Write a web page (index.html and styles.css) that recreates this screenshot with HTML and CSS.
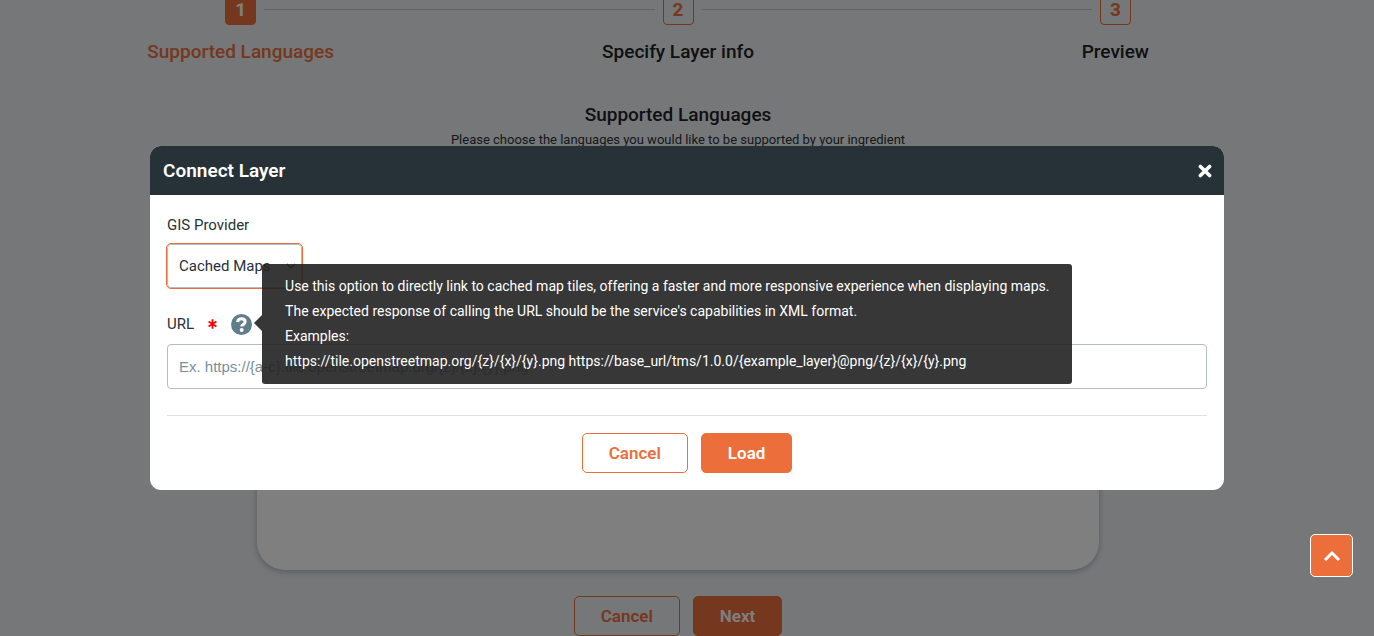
FILE: index.html
```html
<!DOCTYPE html>
<html lang="en">
<head>
    <meta charset="UTF-8">
    <meta name="viewport" content="width=device-width, initial-scale=1.0">
    <title>Connect Layer</title>
    <link rel="stylesheet" href="styles.css">
</head>
<body>
    <main class="page">
        <ol class="steps">
            <li class="step active">
                <div class="step-track"><span class="step-number">1</span></div>
                <span class="step-title">Supported Languages</span>
            </li>
            <li class="step">
                <div class="step-track"><span class="step-number">2</span></div>
                <span class="step-title">Specify Layer info</span>
            </li>
            <li class="step">
                <div class="step-track"><span class="step-number">3</span></div>
                <span class="step-title">Preview</span>
            </li>
        </ol>

        <h1 class="page-title">Supported Languages</h1>
        <p class="page-hint">Please choose the languages you would like to be supported by your ingredient</p>

        <section class="card"></section>

        <div class="actions">
            <button type="button" class="btn btn-outline">Cancel</button>
            <button type="button" class="btn btn-primary">Next</button>
        </div>
    </main>

    <div class="overlay">
        <div class="modal" role="dialog" aria-modal="true" aria-labelledby="modal-title">
            <header class="modal-header">
                <h2 class="modal-title" id="modal-title">Connect Layer</h2>
                <button type="button" class="close" aria-label="Close">
                    <svg width="14" height="14" viewBox="0 0 14 14"><path d="M2.4 2.4l9.2 9.2M11.6 2.4l-9.2 9.2" fill="none" stroke="#fff" stroke-width="3.6" stroke-linecap="round"/></svg>
                </button>
            </header>

            <form class="modal-body">
                <div class="label-row">
                    <label for="provider">GIS Provider</label>
                </div>
                <div class="select-wrap">
                    <select id="provider" class="field provider">
                        <option>Cached Maps</option>
                    </select>
                    <svg class="chevron" width="10" height="6" viewBox="0 0 10 6"><path d="M1 1l4 4 4-4" fill="none" stroke="#263238" stroke-width="1.2"/></svg>
                </div>

                <div class="label-row url-row">
                    <label for="url">URL</label>
                    <svg class="required" width="9" height="10" viewBox="0 0 9 10"><path d="M4.5 .3v9.4M.6 2.6l7.8 4.8M8.4 2.6L.6 7.4" fill="none" stroke="#f00" stroke-width="1.8"/></svg>
                    <span class="help" aria-describedby="url-help">
                        <svg width="21" height="21" viewBox="0 0 512 512"><circle cx="256" cy="256" r="256" fill="#607d8b"/><path d="M160 194c8-52 42-80 96-80 50 0 88 30 88 74 0 36-20 52-46 70-24 16-36 24-36 48" fill="none" stroke="#fff" stroke-width="74"/><circle cx="260" cy="388" r="48" fill="#fff"/></svg>
                        <span class="tooltip" id="url-help" role="tooltip">
                            Use this option to directly link to cached map tiles, offering a faster and more responsive experience when displaying maps.<br>
                            The expected response of calling the URL should be the service's capabilities in XML format.<br>
                            Examples:<br>
                            https://tile.openstreetmap.org/{z}/{x}/{y}.png https://base_url/tms/1.0.0/{example_layer}@png/{z}/{x}/{y}.png
                        </span>
                    </span>
                </div>
                <input type="text" id="url" class="field url" placeholder="Ex. https://{a-c}.tile.openstreetmap.org/{z}/{x}/{y}.png">

                <div class="modal-actions">
                    <button type="button" class="btn btn-outline">Cancel</button>
                    <button type="button" class="btn btn-primary">Load</button>
                </div>
            </form>
        </div>
    </div>

    <button type="button" class="to-top" aria-label="Back to top">
        <svg width="18" height="12" viewBox="0 0 18 12"><path d="M2 10l7-7 7 7" fill="none" stroke="#fff" stroke-width="3"/></svg>
    </button>
</body>
</html>
```
FILE: styles.css
```css
* {
    box-sizing: border-box;
}

body {
    margin: 0;
    padding-right: 18px;
    height: 100vh;
    overflow: hidden;
    font-family: Roboto, sans-serif;
    font-size: 15px;
    color: #263238;
    background-color: #edeff2;
}

h1,
h2,
p {
    margin: 0;
}

.page {
    display: flex;
    flex-direction: column;
    align-items: center;
    margin-top: -6px;
}

/* Steps */
.steps {
    display: grid;
    grid-template-columns: repeat(3, 1fr);
    align-self: stretch;
    margin: 0;
    padding: 0 22px;
    list-style: none;
}

.step {
    display: flex;
    flex-direction: column;
    gap: 14px;
    text-align: center;
}

.step-track {
    display: flex;
    align-items: center;
    gap: 8px;
}

.step-track::before,
.step-track::after {
    content: "";
    flex: 1;
    height: 1px;
    background-color: #c4c8cc;
}

.step:first-child .step-track::before,
.step:last-child .step-track::after {
    visibility: hidden;
}

.step-number {
    width: 31px;
    height: 31px;
    border: 1px solid #eb6e3b;
    border-radius: 4px;
    font-size: 19px;
    font-weight: 700;
    line-height: 30px;
    color: #eb6e3b;
}

.step-title,
.page-title {
    font-size: 19px;
    font-weight: 500;
    line-height: 26px;
    color: #1c2226;
}

.active .step-number {
    background-color: #eb6e3b;
    color: #fff;
}

.active .step-title {
    color: #eb6e3b;
}

.page-title {
    margin-top: 37px;
}

.page-hint {
    font-size: 13px;
    line-height: 24px;
}

.card {
    width: 842px;
    max-width: 90%;
    height: 410px;
    margin-top: 8px;
    border-radius: 28px;
    background-color: #fff;
    box-shadow: 0 2px 6px #a9b8be;
}

/* Buttons */
.actions,
.modal-actions {
    display: flex;
    justify-content: center;
    gap: 13px;
}

.actions {
    margin-top: 26px;
}

.btn {
    height: 40px;
    padding: 0 26px;
    border: 1px solid #eb6e3b;
    border-radius: 5px;
    font-family: inherit;
    font-size: 17px;
    font-weight: 600;
    cursor: pointer;
}

.btn-outline {
    background-color: transparent;
    color: #eb6e3b;
}

.btn-primary {
    background-color: #eb6e3b;
    color: #fff;
}

/* Modal */
.overlay {
    position: fixed;
    inset: 0;
    display: flex;
    align-items: center;
    justify-content: center;
    padding: 0 150px;
    background-color: rgba(0, 0, 0, 0.5);
}

.modal {
    flex: 1;
    border-radius: 11px;
    background-color: #fff;
}

.modal-header {
    display: flex;
    align-items: center;
    justify-content: space-between;
    height: 49px;
    padding: 0 12px 0 13px;
    border-radius: 11px 11px 0 0;
    background-color: #263238;
}

.modal-title {
    font-size: 19px;
    font-weight: 600;
    color: #fff;
}

.close {
    display: flex;
    padding: 0;
    border: none;
    background: none;
    cursor: pointer;
}

.modal-body {
    padding: 17px;
}

.label-row {
    display: flex;
    align-items: center;
    height: 26px;
    margin-bottom: 6px;
}

.url-row {
    margin-top: 23px;
    margin-bottom: 7px;
}

.required {
    margin: 0 14px;
}

.help {
    position: relative;
    display: flex;
}

.tooltip {
    position: absolute;
    top: 50%;
    left: calc(100% + 10px);
    transform: translateY(-50%);
    z-index: 1;
    padding: 10px 23px;
    border-radius: 3px;
    font-size: 14px;
    line-height: 25px;
    white-space: nowrap;
    color: #fff;
    background-color: #222;
    opacity: 0.9;
}

.tooltip::before {
    content: "";
    position: absolute;
    top: 50%;
    right: 100%;
    margin-top: -9px;
    border: 8px solid transparent;
    border-left-width: 0;
    border-right-color: #222;
}

.field {
    display: block;
    height: 45px;
    padding: 0 11px;
    border: 1px solid #b0bec5;
    border-radius: 4px;
    font-size: 15px;
    color: #263238;
    background-color: #fff;
}

.select-wrap {
    display: grid;
    width: 135px;
    align-items: center;
}

.provider {
    grid-area: 1 / 1;
    width: 100%;
    height: 44px;
    appearance: none;
    font-family: inherit;
    outline: 1px solid #eb6e3b;
}

.chevron {
    grid-area: 1 / 1;
    justify-self: end;
    margin-right: 6px;
    pointer-events: none;
}

.url {
    width: 100%;
    font-family: "Liberation Sans", sans-serif;
}

.url::placeholder {
    color: #78909c;
}

.modal-actions {
    margin-top: 26px;
    padding-top: 17px;
    border-top: 1px solid #dfe2e4;
}

.to-top {
    position: fixed;
    right: 21px;
    bottom: 59px;
    display: flex;
    align-items: center;
    justify-content: center;
    width: 43px;
    height: 43px;
    padding: 0;
    border: 1px solid #fff;
    border-radius: 5px;
    background-color: #eb6e3b;
    cursor: pointer;
}
```
